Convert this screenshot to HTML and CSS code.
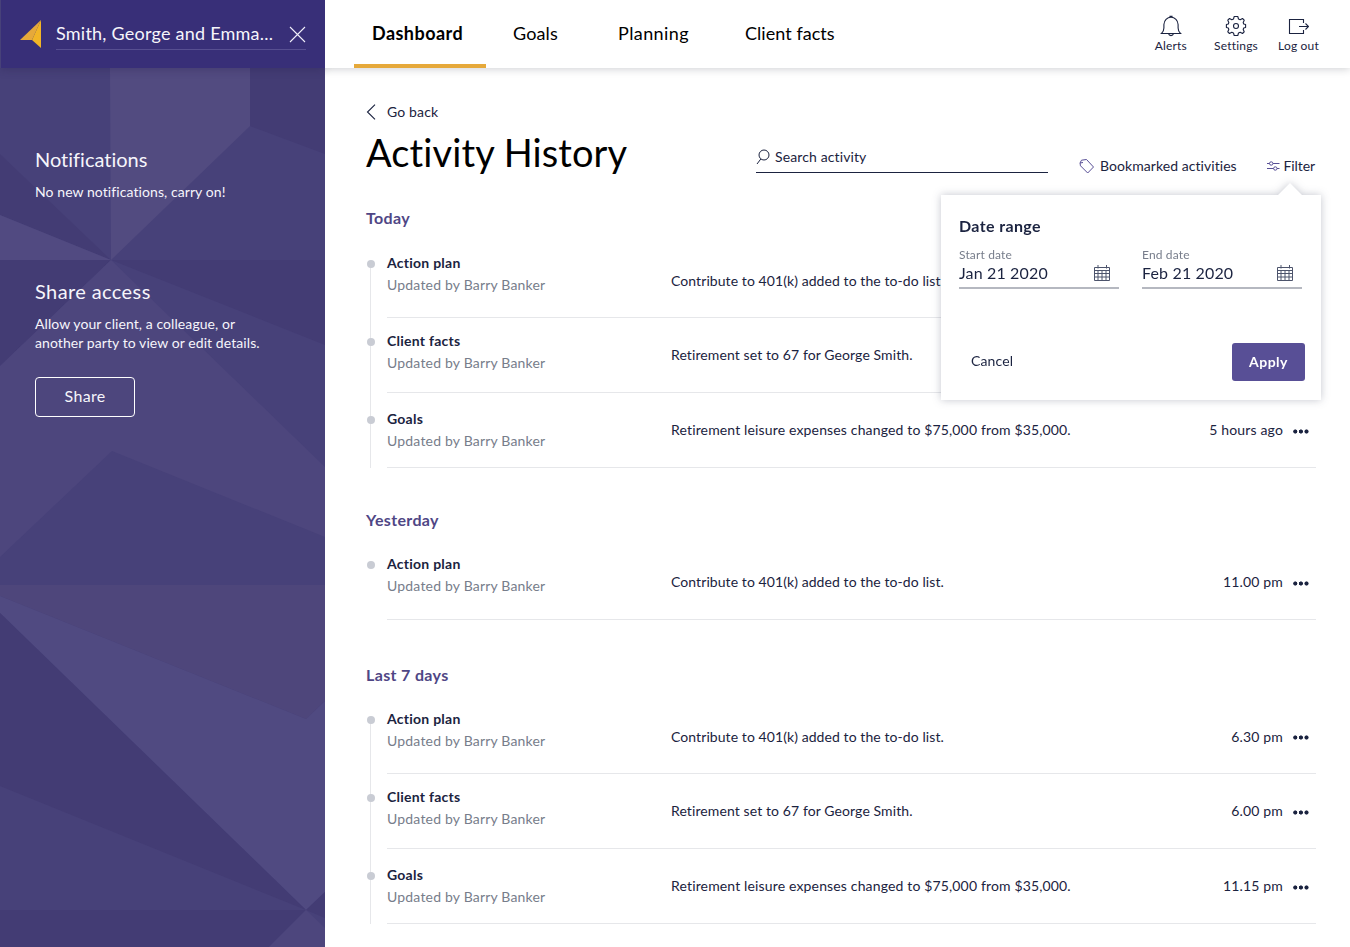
FILE: index.html
```html
<!DOCTYPE html>
<html lang="en">
<head>
<meta charset="utf-8">
<title>Activity History</title>
<link rel="stylesheet" href="styles.css">
</head>
<body>
<div class="app">
  <aside class="sidebar">
    <svg class="facets" viewBox="0 68 325 879" preserveAspectRatio="none" aria-hidden="true">
      <rect y="68" width="325" height="879" fill="#474179"/>
      <path d="M110 68H250V126L111 260Z" fill="#524b80"/>
      <path d="M250 68H325V154L250 126Z" fill="#433c74"/>
      <path d="M0 154L111 260L0 215Z" fill="#433c74"/>
      <path d="M0 215L111 260H0Z" fill="#514a81"/>
      <path d="M0 260H325V345L111 260L0 366Z" fill="#433c74"/>
      <path d="M111 260L325 467V537L112 451L0 557V366Z" fill="#4d467d"/>
      <path d="M0 585H325V701L306 719L0 596Z" fill="#4e467b"/>
      <path d="M0 596L306 719L325 701V892L306 910L0 613Z" fill="#504a81"/>
      <path d="M0 613L306 910L0 786Z" fill="#433c74"/>
      <path d="M0 910H306L269 947H0Z" fill="#433c74"/>
      <path d="M306 910L325 892V918Z" fill="#433c74"/>
      <path d="M306 910L325 928V947H269Z" fill="#4d467d"/>
    </svg>
    <div class="client">
      <svg class="logo" width="22" height="30" viewBox="0 0 22 30"><path d="M21 1L0 21H12Z" fill="#e6a93a"/><path d="M21 1L12 21L21 29Z" fill="#f2b526"/></svg>
      <div class="client-field">
        <span class="client-name">Smith, George and Emma...</span>
        <svg width="17" height="17" viewBox="0 0 17 17" fill="none" stroke="#f0effa" stroke-width="1.1"><path d="M1 1L16 16M16 1L1 16"/></svg>
      </div>
    </div>
    <div class="side-body">
      <section class="notice">
        <h2 class="side-title">Notifications</h2>
        <p class="side-text">No new notifications, carry on!</p>
      </section>
      <section>
        <h2 class="side-title share-title">Share access</h2>
        <p class="side-text">Allow your client, a colleague, or<br>another party to view or edit details.</p>
        <button class="share">Share</button>
      </section>
    </div>
  </aside>

  <div class="main">
    <header class="topbar">
      <nav class="tabs">
        <a class="tab active">Dashboard</a>
        <a class="tab goals">Goals</a>
        <a class="tab planning">Planning</a>
        <a class="tab facts">Client facts</a>
      </nav>
      <div class="tools">
        <a class="tool alerts"><svg width="22" height="22" viewBox="0 0 22 22" fill="none" stroke="#1b2340" stroke-width="1.1"><path d="M1.500 18.500Q3.800 16.500 3.900 13V9.500C4.100 5.500 7 2.200 11 2.200S17.900 5.500 18.100 9.500V13Q18.200 16.500 20.500 18.500ZM10 2V1.200H12V2M8.500 18.700Q9 20.600 11 20.600T13.500 18.700"/></svg>Alerts</a>
        <a class="tool settings"><svg width="22" height="22" viewBox="0 0 22 22" fill="none" stroke="#1b2340" stroke-width="1.1" stroke-linejoin="round"><path d="M9.200 1.500H12.800L13.500 4L15.200 4.700L17.500 3.500L19.200 5.200L18.200 7.500L18.700 9L20.600 9.600V12.400L18.700 13L18.200 14.500L19.200 16.800L17.500 18.500L15.200 17.300L13.500 18L12.800 20.500H9.200L8.500 18L6.800 17.300L4.500 18.500L2.800 16.800L3.800 14.500L3.300 13L1.400 12.400V9.600L3.300 9L3.800 7.500L2.800 5.200L4.500 3.500L6.800 4.700L8.500 4Z"/><circle cx="11" cy="11" r="2.500"/></svg>Settings</a>
        <a class="tool logout"><svg width="22" height="22" viewBox="0 0 22 22" fill="none" stroke="#1b2340" stroke-width="1.1"><path d="M16.500 8V4.500H2.500V18.500H16.500V15M12 11.500H21.500M18.500 8.500L21.500 11.500L18.500 14.500"/></svg>Log out</a>
      </div>
    </header>

    <main class="content">
      <a class="back"><svg width="10" height="16" viewBox="0 0 10 16" fill="none" stroke="#1b2340" stroke-width="1.1"><path d="M9 .7L1.500 8L9 15.300"/></svg>Go back</a>
      <div class="heading">
        <h1 class="title">Activity History</h1>
        <label class="search"><svg width="14" height="16" viewBox="0 0 14 16" fill="none" stroke="#1b2340"><circle cx="8" cy="6" r="5"/><path d="M4.800 10L1 15"/></svg>Search activity</label>
        <a class="bookmarks"><svg width="16" height="16" viewBox="0 0 16 16" fill="none" stroke="#584f96"><path d="M1 5L2.500 2.200L7.500 1.500L14.500 9L8.700 15L1.500 7.800L1 5L4 4.500"/></svg>Bookmarked activities</a>
        <div class="filter">
          <a class="filter-link"><svg width="13" height="10" viewBox="0 0 13 10" fill="none" stroke="#584f96"><path d="M0 2.500H2.500M6 2.500H12.500M0 7.500H6.500M10 7.500H12.500"/><circle cx="4.200" cy="2.500" r="1.700"/><circle cx="8.300" cy="7.500" r="1.700"/></svg>Filter</a>
          <div class="popover">
            <h3 class="pop-title">Date range</h3>
            <div class="dates">
              <label class="date"><span class="date-label">Start date</span>
                <span class="date-value">Jan 21 2020<svg width="17" height="17" viewBox="0 0 17 17" fill="none" stroke="#4d546c"><path d="M.5 2.500H15.500V15.500H.5ZM.5 5.500H15.500M.5 8.500H15.500M.5 12H15.500M4 5.500V15.500M8 5.500V15.500M12 5.500V15.500M4 0V3.500M12.500 0V3.500"/></svg></span>
              </label>
              <label class="date"><span class="date-label">End date</span>
                <span class="date-value">Feb 21 2020<svg width="17" height="17" viewBox="0 0 17 17" fill="none" stroke="#4d546c"><path d="M.5 2.500H15.500V15.500H.5ZM.5 5.500H15.500M.5 8.500H15.500M.5 12H15.500M4 5.500V15.500M8 5.500V15.500M12 5.500V15.500M4 0V3.500M12.500 0V3.500"/></svg></span>
              </label>
            </div>
            <div class="actions"><button class="cancel">Cancel</button><button class="apply">Apply</button></div>
          </div>
        </div>
      </div>

      <section class="group">
        <h2 class="group-title">Today</h2>
        <ul class="timeline linked">
          <li class="row"><div class="who"><b>Action plan</b><span>Updated by Barry Banker</span></div><p class="what list">Contribute to 401(k) added to the to-do list.</p></li>
          <li class="row"><div class="who"><b>Client facts</b><span>Updated by Barry Banker</span></div><p class="what set">Retirement set to 67 for George Smith.</p></li>
          <li class="row"><div class="who"><b>Goals</b><span>Updated by Barry Banker</span></div><p class="what">Retirement leisure expenses changed to $75,000 from $35,000.</p><time class="when">5 hours ago</time><i class="more"></i></li>
        </ul>
      </section>
      <section class="group yesterday">
        <h2 class="group-title">Yesterday</h2>
        <ul class="timeline">
          <li class="row"><div class="who"><b>Action plan</b><span>Updated by Barry Banker</span></div><p class="what list">Contribute to 401(k) added to the to-do list.</p><time class="when">11.00 pm</time><i class="more"></i></li>
        </ul>
      </section>
      <section class="group week">
        <h2 class="group-title">Last 7 days</h2>
        <ul class="timeline linked">
          <li class="row"><div class="who"><b>Action plan</b><span>Updated by Barry Banker</span></div><p class="what list">Contribute to 401(k) added to the to-do list.</p><time class="when">6.30 pm</time><i class="more"></i></li>
          <li class="row"><div class="who"><b>Client facts</b><span>Updated by Barry Banker</span></div><p class="what set">Retirement set to 67 for George Smith.</p><time class="when">6.00 pm</time><i class="more"></i></li>
          <li class="row"><div class="who"><b>Goals</b><span>Updated by Barry Banker</span></div><p class="what">Retirement leisure expenses changed to $75,000 from $35,000.</p><time class="when">11.15 pm</time><i class="more"></i></li>
        </ul>
      </section>
    </main>
  </div>
</div>
</body>
</html>
```
FILE: styles.css
```css
* { box-sizing: border-box; }
body, h1, h2, h3, p, ul { margin: 0; padding: 0; }
body {
  font: 14px/20px Lato, "Open Sans", sans-serif;
  letter-spacing: 0.12px;
  color: #1b2340;
  background: #fff;
  white-space: nowrap;
  font-variant-ligatures: none;
}
svg { display: block; flex: none; }
button { font: inherit; letter-spacing: inherit; color: inherit; background: none; border: 0; padding: 0; }

.app { display: flex; height: 947px; overflow: hidden; }

/* Sidebar */
.sidebar { position: relative; width: 325px; flex: none; color: #f6f5fb; background: #474179; }
.facets { position: absolute; top: 68px; left: 0; width: 325px; height: 879px; }
.client {
  position: relative;
  display: flex;
  height: 68px;
  padding: 19px 19px 0 19px;
  gap: 14px;
  background: #382f78;
  border-left: 1px solid #474179;
  box-shadow: 0 2px 8px rgba(40, 34, 80, 0.3);
}
.client-field {
  display: flex;
  flex: 1;
  justify-content: space-between;
  align-items: center;
  height: 31px;
  border-bottom: 1px solid #574f91;
}
.client-name { font-size: 18px; letter-spacing: 0.23px; padding-bottom: 2px; }
.side-body { position: relative; padding: 77px 35px 0; }
.notice { height: 132px; }
.side-title { font-size: 20px; line-height: 28px; font-weight: 400; letter-spacing: 0; }
.share-title { letter-spacing: 0.4px; }
.side-text { margin-top: 9px; line-height: 19px; letter-spacing: 0.08px; }
.share {
  display: block;
  width: 100px;
  height: 40px;
  margin-top: 25px;
  padding-bottom: 2px;
  font-size: 16px;
  letter-spacing: 0.3px;
  border: 1px solid #fff;
  border-radius: 4px;
}

/* Top bar */
.main { flex: 1; min-width: 0; }
.topbar {
  position: relative;
  display: flex;
  justify-content: space-between;
  height: 68px;
  padding: 0 31px 0 29px;
  background: #fff;
  box-shadow: 0 1px 8px rgba(30, 35, 50, 0.22);
  clip-path: inset(0 0 -14px 0);
}
.tabs { display: flex; color: #000; font-size: 18px; line-height: 66px; }
.active { width: 132px; padding-left: 18px; font-weight: 700; letter-spacing: 0.45px; border-bottom: 4px solid #e6a93a; }
.goals { margin-left: 27px; width: 105px; }
.planning { width: 127px; letter-spacing: 0.4px; }
.facts { letter-spacing: 0.05px; }
.tools { display: flex; font-size: 12px; line-height: 18px; padding-top: 15px; letter-spacing: 0.2px; }
.tool { display: flex; flex-direction: column; align-items: center; }
.alerts { margin-right: 27px; }
.settings { margin-right: 20px; }

/* Page heading */
.content { padding: 34px 34px 0 41px; }
.back { display: flex; align-items: center; gap: 11px; height: 20px; letter-spacing: 0.15px; }
.heading { display: flex; height: 80px; }
.title { width: 390px; font-size: 38px; line-height: 46px; padding-top: 7px; font-weight: 400; color: #000; letter-spacing: 0.1px; }
.search {
  display: flex;
  align-items: center;
  gap: 5px;
  width: 292px;
  height: 32px;
  margin-top: 19px;
  border-bottom: 1px solid #1b2340;
}
.bookmarks { display: flex; align-items: center; gap: 5px; height: 20px; margin: 34px 0 0 31px; letter-spacing: 0.06px; }
.filter { position: relative; margin: 34px 1px 0 auto; letter-spacing: -0.1px; }
.filter-link { display: flex; align-items: center; gap: 4px; }

/* Date filter */
.popover {
  position: absolute;
  z-index: 2;
  top: 39px;
  right: -6px;
  width: 380px;
  height: 205px;
  padding: 21px 19px 0 18px;
  background: #fff;
  filter: drop-shadow(0 0 4px rgba(27, 35, 64, 0.26));
}
.popover::before {
  content: "";
  position: absolute;
  top: -20px;
  left: 329px;
  width: 40px;
  height: 21px;
  background: #fff;
  clip-path: polygon(20px 8px, 32px 20px, 32px 21px, 8px 21px, 8px 20px);
}
.pop-title { font-size: 16px; line-height: 20px; letter-spacing: 0.38px; }
.dates { display: grid; grid-template-columns: 160px 160px; gap: 23px; margin-top: 12px; }
.date { display: flex; flex-direction: column; height: 41px; border-bottom: 2px solid #b5b8c0; }
.date-label { font-size: 12px; line-height: 14px; letter-spacing: 0.15px; color: #777d8b; }
.date-value { display: flex; justify-content: space-between; align-items: center; padding-right: 8px; font-size: 16px; line-height: 22px; letter-spacing: 0.15px; }
.actions { display: flex; justify-content: space-between; align-items: center; height: 38px; margin: 54px -3px 0 12px; }
.cancel { letter-spacing: 0.12px; padding-bottom: 2px; }
.apply { width: 73px; height: 38px; color: #fff; font-weight: 700; letter-spacing: 0.5px; background: #584f96; border-radius: 3px; }

/* Activity groups */
.group { padding-top: 6px; }
.group + .group { padding-top: 42px; }
.group + .week { padding-top: 45px; }
.group-title { font-size: 16px; line-height: 20px; height: 35px; letter-spacing: 0.35px; color: #4f4685; }
.week .group-title { height: 34px; }
.timeline { list-style: none; }
.linked { background: linear-gradient(#e6e7ea, #e6e7ea) 4px 20px / 1px 100% no-repeat; }
.row {
  position: relative;
  display: grid;
  grid-template-columns: 284px 1fr auto auto;
  align-items: start;
  height: 75px;
  margin-left: 21px;
  border-bottom: 1px solid #e6e7ea;
}
.row::before {
  content: "";
  position: absolute;
  top: 17px;
  left: -20px;
  width: 8px;
  height: 8px;
  border-radius: 50%;
  background: #c9ccd4;
}
.row:nth-child(2)::before { top: 20px; }
.row:nth-child(3)::before { top: 23px; }
.yesterday .row::before { top: 16px; }
.who { display: flex; flex-direction: column; gap: 2px; padding-top: 10px; }
.row:nth-child(2) .who { padding-top: 13px; }
.row:nth-child(3) .who { padding-top: 16px; }
.yesterday .who { padding-top: 9px; }
.who b { letter-spacing: 0.25px; }
.who span { color: #777d8b; letter-spacing: 0.19px; }
.what, .when { padding-top: 28px; letter-spacing: 0.15px; }
.row:nth-child(n+2) .what,
.row:nth-child(n+2) .when,
.yesterday .what,
.yesterday .when { padding-top: 27px; }
.list { letter-spacing: 0.08px; }
.set { letter-spacing: 0.1px; }
.more {
  width: 16px;
  height: 5px;
  margin: 36px 7px 0 10px;
  background:
    radial-gradient(circle at 2.3px 2.5px, #1b2340 1.7px, transparent 2.4px),
    radial-gradient(circle at 7.9px 2.5px, #1b2340 1.7px, transparent 2.4px),
    radial-gradient(circle at 13.500px 2.5px, #1b2340 1.7px, transparent 2.4px);
}
```
